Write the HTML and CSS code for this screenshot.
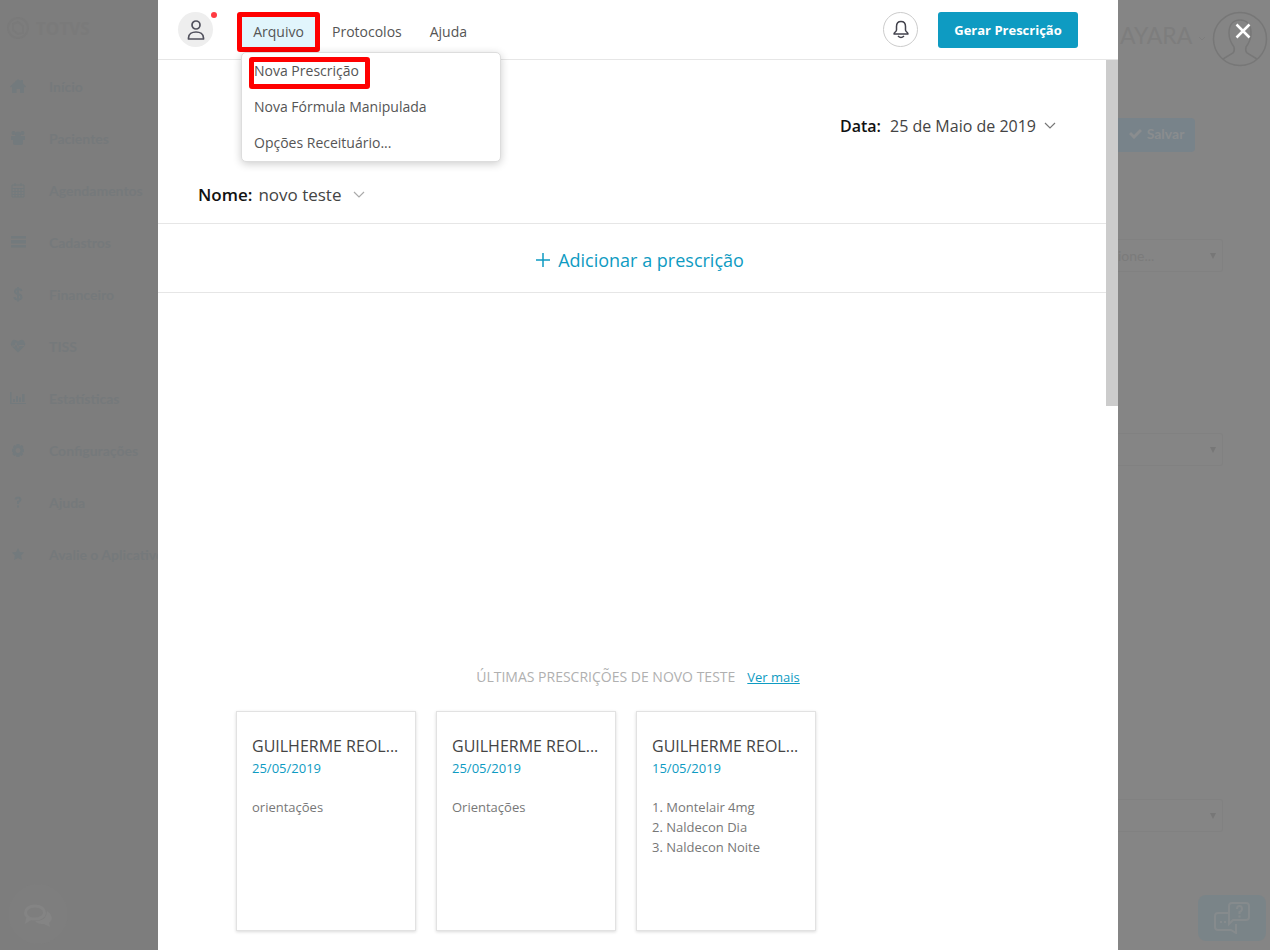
FILE: index.html
```html
<!DOCTYPE html>
<html lang="pt-BR">
<head>
<meta charset="utf-8">
<title>Prescrição</title>
<link rel="stylesheet" href="styles.css">
</head>
<body>
<div class="screen">
  <aside class="sidebar">
    <div class="brand">
      <svg width="24" height="24" viewBox="0 0 24 24" fill="none" stroke="currentColor" stroke-width="2"><circle cx="12" cy="12" r="10"/><path d="M7 8l5-2 5 4v7l-5 1-5-4z"/></svg>
      <span>TOTVS</span>
    </div>
    <nav class="side-nav">
      <a href="#"><svg viewBox="0 0 18 18"><path d="M9 2l2.500 2.200V3h2.500v3.500L17 9.500l-1 1-1-.8V16h-4v-4H7.500v4H3V9.700l-1 .8-1-1z"/></svg>Início</a>
      <a href="#"><svg viewBox="0 0 18 18"><circle cx="4.500" cy="4" r="2"/><circle cx="13.500" cy="4" r="2"/><circle cx="9" cy="5.500" r="3"/><path d="M2 7h14v4h-2v3q0 2-2 2H6q-2 0-2-2v-3H2z"/></svg>Pacientes</a>
      <a href="#"><svg viewBox="0 0 18 18" class="line"><path d="M3 4h12v12H3zM3 7.500h12M6 7.500V16M9 7.500V16M12 7.500V16M3 10.500h12M3 13.500h12M6 2v3M12 2v3"/></svg>Agendamentos</a>
      <a href="#"><svg viewBox="0 0 18 18"><path d="M2 3h15v2.500H2zM2 7h15v3.500H2zM2 12h15v2.500H2z"/></svg>Cadastros</a>
      <a href="#"><svg viewBox="0 0 18 18" class="thick"><path d="M12.500 6q-.5-2-3.500-2T6 6.500Q6 8.500 9 9t3.500 3q0 2.500-3.500 2.500T5.500 12M9 2v14.500"/></svg>Financeiro</a>
      <a href="#"><svg viewBox="0 0 18 18"><path fill-rule="evenodd" d="M9 15.500L2.500 9Q1 6.500 3 4t6 .5Q13 1.500 15 4t.5 5zM3 8.500v1h3l1-2.500 2 5 1.500-3H15v-1h-5L9 10 7 5 5.500 8.500z"/></svg>TISS</a>
      <a href="#"><svg viewBox="0 0 18 18"><path d="M1 3h1.500v11H17v1H1zM4 10h2v3H4zM7 7h2v6H7zM10 8.500h2V13h-2zM13 5h2.500v8H13z"/></svg>Estatísticas</a>
      <a href="#"><svg viewBox="0 0 18 18"><path fill-rule="evenodd" d="M7.500 3h3l.4 2 2-1 1.500 2-1 1.500 1.600.5v3l-1.800.4 1 1.600-1.700 2-1.800-1-.2 2h-3l-.5-2-1.700 1-2-2 1-1.700L3 11V8l1.600-.4L4 6l1.600-2 1.700 1zM9 7a2.500 2.500 0 1 0 .01 0z"/></svg>Configurações</a>
      <a href="#"><svg viewBox="0 0 18 18" class="thick"><path d="M6.500 6.500Q7 4.500 9 4.500t2.500 2Q11.500 8 9 9v2M9 12.500v2"/></svg>Ajuda</a>
      <a href="#"><svg viewBox="0 0 18 18"><path d="M9 3l1.900 4 4.300.6-3.100 3 .8 4.400L9 13l-3.900 2 .8-4.400-3.100-3L7.100 7z"/></svg>Avalie o Aplicativo</a>
    </nav>
    <button class="chat" aria-label="Chat">
      <svg width="30" height="24" viewBox="0 0 30 24"><path fill="none" stroke="currentColor" stroke-width="3" d="M12 2c6 0 9.500 3 9.500 6.500S18 15 12 15c-2 0-3 0-4-.5L4 17l1-4C3 12 2.500 10 2.500 8.500 2.500 5 6 2 12 2z"/><path fill="currentColor" d="M24 7c6 4 6 9 2 12l1 4-6-3c-4 0-7-.5-9-3 7 0 12-3 12-10z"/></svg>
    </button>
  </aside>

  <main class="modal">
    <header class="topbar">
      <button class="avatar" aria-label="Perfil">
        <svg width="20" height="24" viewBox="0 0 20 24" fill="none" stroke="#50505c" stroke-width="1.700"><circle cx="10" cy="7" r="4"/><path d="M2.500 21v-1c0-4 3.500-6 7.500-6s7.500 2 7.500 6v1z" stroke-linejoin="round"/></svg>
        <i class="dot"></i>
      </button>
      <nav class="menu">
        <div class="menu-group">
          <button class="menu-btn active">Arquivo</button>
          <div class="dropdown">
            <button class="marked">Nova Prescrição</button>
            <button>Nova Fórmula Manipulada</button>
            <button>Opções Receituário...</button>
          </div>
        </div>
        <button class="menu-btn">Protocolos</button>
        <button class="menu-btn">Ajuda</button>
      </nav>
      <button class="bell" aria-label="Notificações">
        <svg width="18" height="20" viewBox="0 0 18 20" fill="none" stroke="#42424c" stroke-width="1.500"><path d="M9 1.500C6 1.500 4.500 3.500 4.500 6.500V10c0 2-2.500 2-2.500 4h14c0-2-2.500-2-2.500-4V6.500C13.500 3.500 12 1.500 9 1.500z" stroke-linejoin="round"/><path d="M6 16q3 3 6 0"/></svg>
      </button>
      <button class="primary">Gerar Prescrição</button>
    </header>
    <div class="body">
      <div class="doc">
        <div class="date-row">
          <span class="label">Data:</span>
          <button class="value">25 de Maio de 2019
            <svg width="12" height="8" viewBox="0 0 12 8" fill="none" stroke="#777" stroke-width="1.200"><path d="M1 1l5 5 5-5"/></svg>
          </button>
        </div>
        <div class="name-row">
          <span class="label">Nome:</span>
          <button class="value name">novo teste
            <svg width="12" height="8" viewBox="0 0 12 8" fill="none" stroke="#aaa" stroke-width="1.200"><path d="M1 1l5 5 5-5"/></svg>
          </button>
        </div>
        <button class="add">
          <svg width="14" height="14" viewBox="0 0 14 14" stroke="currentColor" stroke-width="1.500"><path d="M7 0v14M0 7h14"/></svg>
          Adicionar a prescrição
        </button>
        <section class="history">
          <div class="history-head"><h2>ÚLTIMAS PRESCRIÇÕES DE NOVO TESTE</h2><a href="#">Ver mais</a></div>
          <div class="cards">
            <article class="card"><h3>GUILHERME REOL...</h3><time>25/05/2019</time><p>orientações</p></article>
            <article class="card"><h3>GUILHERME REOL...</h3><time>25/05/2019</time><p>Orientações</p></article>
            <article class="card"><h3>GUILHERME REOL...</h3><time>15/05/2019</time><p>1. Montelair 4mg<br>2. Naldecon Dia<br>3. Naldecon Noite</p></article>
          </div>
        </section>
      </div>
      <div class="scrollbar"><div class="thumb"></div></div>
    </div>
  </main>

  <aside class="backdrop">
    <div class="user">
      <span>AYARA</span>
      <svg width="8" height="6" viewBox="0 0 8 6" fill="none" stroke="currentColor"><path d="M1 1l3 3 3-3"/></svg>
      <div class="photo">
        <svg width="56" height="56" viewBox="0 0 56 56" fill="none" stroke="currentColor" stroke-width="1.500"><circle cx="28" cy="28" r="26.500"/><path d="M11 48l10-6q2-2 1-6c-3-4-5-9-5-14 0-8 4-13 11-13s11 5 11 13c0 5-2 10-5 14q-1 4 1 6l10 6"/></svg>
        <button class="close" aria-label="Fechar"><svg width="16" height="16" viewBox="0 0 16 16" stroke="#fff" stroke-width="2.500"><path d="M1.500 1.500l13 13M14.500 1.500l-13 13"/></svg></button>
      </div>
    </div>
    <button class="save"><svg width="13" height="11" viewBox="0 0 13 11" fill="none" stroke="currentColor" stroke-width="3"><path d="M1 5l4 4 7-7"/></svg>Salvar</button>
    <div class="fields">
      <label class="field"><select aria-label="Seleção"><option>ione...</option></select></label>
      <label class="field"><select aria-label="Opção"><option></option></select></label>
      <label class="field last"><select aria-label="Outra opção"><option></option></select></label>
    </div>
    <button class="help" aria-label="Suporte">
      <svg width="36" height="32" viewBox="0 0 36 32" fill="none" stroke="currentColor" stroke-width="2"><path d="M14 11H4q-3 0-3 3v11q0 3 3 3h13l5 3v-9"/><path d="M18 1h14q3 0 3 3v11q0 3-3 3H19l-4 4V4q0-3 3-3z"/><path d="M23 7q0-3 2.500-3T28 7q0 2-2.500 3v2M25.500 13.500v2M6 20h2M10 20h2"/></svg>
    </button>
  </aside>
</div>
</body>
</html>
```

FILE: styles.css
```css
*, *::before, *::after { box-sizing: border-box; }
body { margin: 0; font-family: "Open Sans", sans-serif; font-size: 14px; color: #444; }
button { font: inherit; color: inherit; background: none; border: 0; padding: 0; cursor: pointer; }
h2, h3, p { margin: 0; font-weight: 400; }
svg { flex: none; display: block; }
.screen { display: grid; grid-template-columns: 158px minmax(0, 1fr) 152px; min-height: 100vh; }

.sidebar { background: #7d7d7d; overflow: hidden; display: flex; flex-direction: column; min-width: 0; }
.brand { display: flex; align-items: center; gap: 6px; padding: 16px 6px 20px; height: 60px; color: #7a7a7a; font-size: 17px; font-weight: 700; }
.side-nav { display: flex; flex-direction: column; }
.side-nav a { display: flex; align-items: center; gap: 22px; height: 52px; padding-left: 9px; color: #75797b; font-family: Lato, sans-serif; font-weight: 700; text-decoration: none; white-space: nowrap; }
.side-nav svg { width: 18px; height: 18px; fill: #737a7d; }
.side-nav .line, .side-nav .thick { fill: none; stroke: #737a7d; }
.side-nav .thick { stroke-width: 2; }
.chat { display: flex; align-items: center; justify-content: center; width: 60px; height: 60px; margin: auto 0 6px 8px; padding-top: 4px; border-radius: 50%; background: #7e7e7e; color: #848484; }

.modal { display: flex; flex-direction: column; background: #fff; min-width: 0; }
.topbar { display: flex; align-items: center; height: 60px; padding: 0 40px 0 20px; border-bottom: 1px solid #e6e6e6; }
.avatar { position: relative; display: flex; align-items: center; justify-content: center; width: 35px; height: 35px; border-radius: 50%; background: #eee; }
.dot { position: absolute; top: 0; right: -4px; width: 6px; height: 6px; border-radius: 50%; background: #ff3b42; }
.menu { display: flex; align-items: center; margin: 5px auto 0 24px; color: #555; }
.menu-group { position: relative; }
.menu-btn { height: 40px; padding: 0 14px 2px; }
.menu-btn.active { width: 83px; padding: 0 0 2px; margin-right: -2px; border: 5px solid #f00; border-radius: 3px; background: #e1f5fc; }
.dropdown { position: absolute; z-index: 2; top: 100%; left: 4px; display: flex; flex-direction: column; width: 260px; border: 1px solid #ddd; border-radius: 5px; background: #fff; box-shadow: 0 2px 8px rgba(0,0,0,.2); }
.dropdown button { position: relative; height: 36px; padding: 0 12px 2px; text-align: left; }
.marked::after { content: ""; position: absolute; top: 4px; left: 7px; width: 121px; height: 32px; border: 5px solid #f00; border-radius: 3px; }
.bell { display: flex; align-items: center; justify-content: center; width: 35px; height: 35px; margin-right: 20px; border: 1px solid #ccc; border-radius: 50%; }
.primary { height: 36px; width: 140px; border-radius: 3px; background: #0e9bc2; color: #fff; font-size: 13px; font-weight: 700; }

.body { flex: 1; display: flex; }
.doc { flex: 1; min-width: 0; display: flex; flex-direction: column; }
.scrollbar { width: 12px; }
.thumb { height: 346px; background: #ccc; }
.label { color: #111; font-weight: 600; }
.value { display: flex; align-items: center; gap: 8px; }
.date-row { display: flex; align-items: center; justify-content: flex-end; gap: 9px; padding: 55px 50px 0 40px; font-size: 16px; }
.name-row { display: flex; align-items: center; gap: 6px; height: 87px; padding: 29px 40px 0; border-bottom: 1px solid #e6e6e6; font-size: 17px; }
.value.name { gap: 12px; }
.add { display: flex; align-items: center; justify-content: center; gap: 8px; height: 69px; padding: 4px 0 0 16px; border-bottom: 1px solid #e6e6e6; color: #0e9bc2; font-size: 18px; }
.history { margin-top: auto; padding: 0 78px 19px; }
.history-head { display: flex; align-items: center; justify-content: center; gap: 12px; padding-left: 12px; margin-bottom: 24px; line-height: 20px; font-size: 13px; }
.history-head h2 { color: #b0b0b0; font-size: 14px; }
.history-head a, .card time { color: #0e9bc2; }
.cards { display: flex; gap: 20px; }
.card { width: 180px; height: 220px; padding: 22px 15px; border: 1px solid #e2e2e2; box-shadow: 0 1px 3px rgba(0,0,0,.15); font-size: 13px; }
.card h3 { white-space: nowrap; font-size: 16px; line-height: 24px; color: #444; }
.card time { display: block; line-height: 20px; margin-bottom: 19px; }
.card p { line-height: 20px; color: #777; }

.backdrop { display: flex; flex-direction: column; align-items: flex-start; min-width: 0; background: #858585; color: #7d7d7d; overflow: hidden; }
.user { display: flex; align-items: center; align-self: stretch; padding: 11px 2px 0; font-family: Lato, sans-serif; font-size: 23px; }
.user span { padding-bottom: 8px; }
.user > svg { margin: 0 auto; }
.photo { position: relative; color: #777; }
.close { position: absolute; top: 12px; left: 23px; }
.save { display: flex; align-items: center; justify-content: center; gap: 5px; width: 77px; height: 34px; margin-top: 51px; padding-bottom: 3px; border-radius: 0 4px 4px 0; background: #78838a; color: #8a8d8f; font-family: Lato, sans-serif; font-weight: 700; }
.fields { align-self: stretch; padding: 87px 47px 0 0; }
.field { display: flex; align-items: center; height: 33px; margin-bottom: 161px; border: 1px solid #818181; border-left: 0; border-radius: 0 3px 3px 0; }
.field.last { margin: 333px 0 0; }
.field select { flex: 1; min-width: 0; appearance: none; border: 0; background: none; color: #7b7b7b; font: 14px Lato, sans-serif; padding: 0; }
.field::after { content: ""; margin-right: 6px; border: 3px solid transparent; border-top: 6px solid #777; border-bottom: 0; }
.help { display: flex; align-items: center; justify-content: center; align-self: flex-end; width: 68px; height: 46px; margin: auto 4px 9px 0; border-radius: 8px; background: #7a8488; color: #868b8d; }
```
